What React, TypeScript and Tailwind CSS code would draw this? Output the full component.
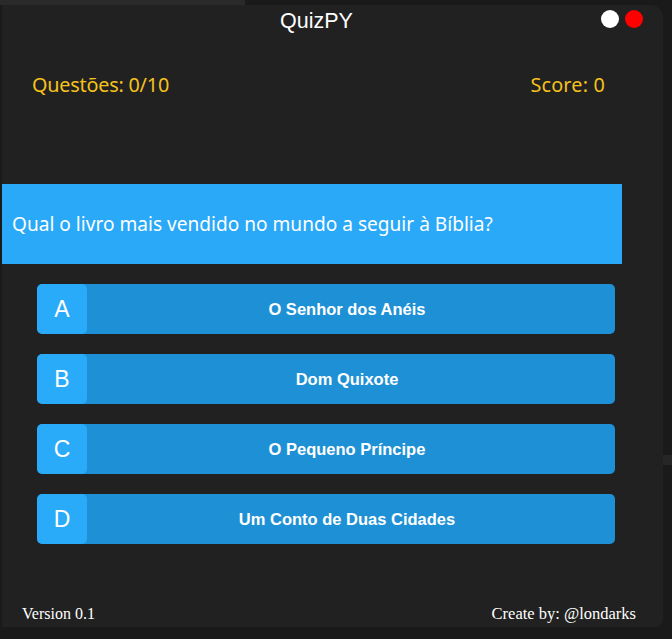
import React from "react";

const options = [
  { l: "A", t: "O Senhor dos Anéis" },
  { l: "B", t: "Dom Quixote" },
  { l: "C", t: "O Pequeno Príncipe" },
  { l: "D", t: "Um Conto de Duas Cidades" },
];

export default function App() {
  return (
    <div className="relative w-[672px] h-[639px] overflow-hidden bg-[#1a1a1a]">
      <div className="absolute left-0 top-0 w-[245px] h-[5px] bg-[#2a2a2a]" />
      <div className="absolute right-0 top-[455px] w-[9px] h-[10px] bg-[#262626]" />
      <div className="relative ml-[2px] mt-[5px] w-[661px] h-[622px] rounded-tr-xl rounded-br-lg bg-[#212121] flex flex-col">
        {/* header */}
        <div className="relative h-[36px]">
          <div className="absolute left-[278px] top-[2px] text-[21.5px] leading-[28px] text-white font-['Liberation_Sans',sans-serif]">
            QuizPY
          </div>
          <div className="absolute left-[599px] top-[5px] flex gap-[6px]">
            <div className="w-[18px] h-[18px] rounded-full bg-white" />
            <div className="w-[18px] h-[18px] rounded-full bg-[#ff0000]" />
          </div>
        </div>
        {/* stats */}
        <div className="flex justify-between pl-[30px] pr-[58px] mt-[31px] text-[19.8px] leading-[26px] text-[#f6c21c] font-['Noto_Sans',sans-serif] tracking-[-0.2px]">
          <span>Questões: 0/10</span>
          <span className="tracking-[0.2px]">Score: 0</span>
        </div>
        {/* question */}
        <div className="mt-[86px] w-[620px] h-[80px] bg-[#2aa9f8] flex items-center pl-[10px]">
          <span className="text-[19.1px] text-white font-['Noto_Sans',sans-serif]">
            Qual o livro mais vendido no mundo a seguir à Bíblia?
          </span>
        </div>
        {/* options */}
        <div className="mt-[20px] ml-[35px] w-[578px] flex flex-col gap-[20px]">
          {options.map((o) => (
            <div key={o.l} className="flex h-[50px] rounded-[5px] bg-[#1e90d5] overflow-hidden">
              <div className="w-[50px] h-full rounded-[5px] bg-[#2aabf9] flex items-center justify-center text-white text-[23px] font-['Liberation_Sans',sans-serif]">
                {o.l}
              </div>
              <div className="flex-1 flex items-center justify-center pr-[8px] pt-[1px] text-white text-[16.5px] font-bold font-['Liberation_Sans',sans-serif]">
                {o.t}
              </div>
            </div>
          ))}
        </div>
        {/* footer */}
        <div className="mt-auto mb-[3px] flex justify-between pl-[20px] pr-[27px] text-[16px] leading-[20px] text-white font-['Liberation_Serif',serif]">
          <span>Version 0.1</span>
          <span className="text-[16.5px]">Create by: @londarks</span>
        </div>
      </div>
    </div>
  );
}
